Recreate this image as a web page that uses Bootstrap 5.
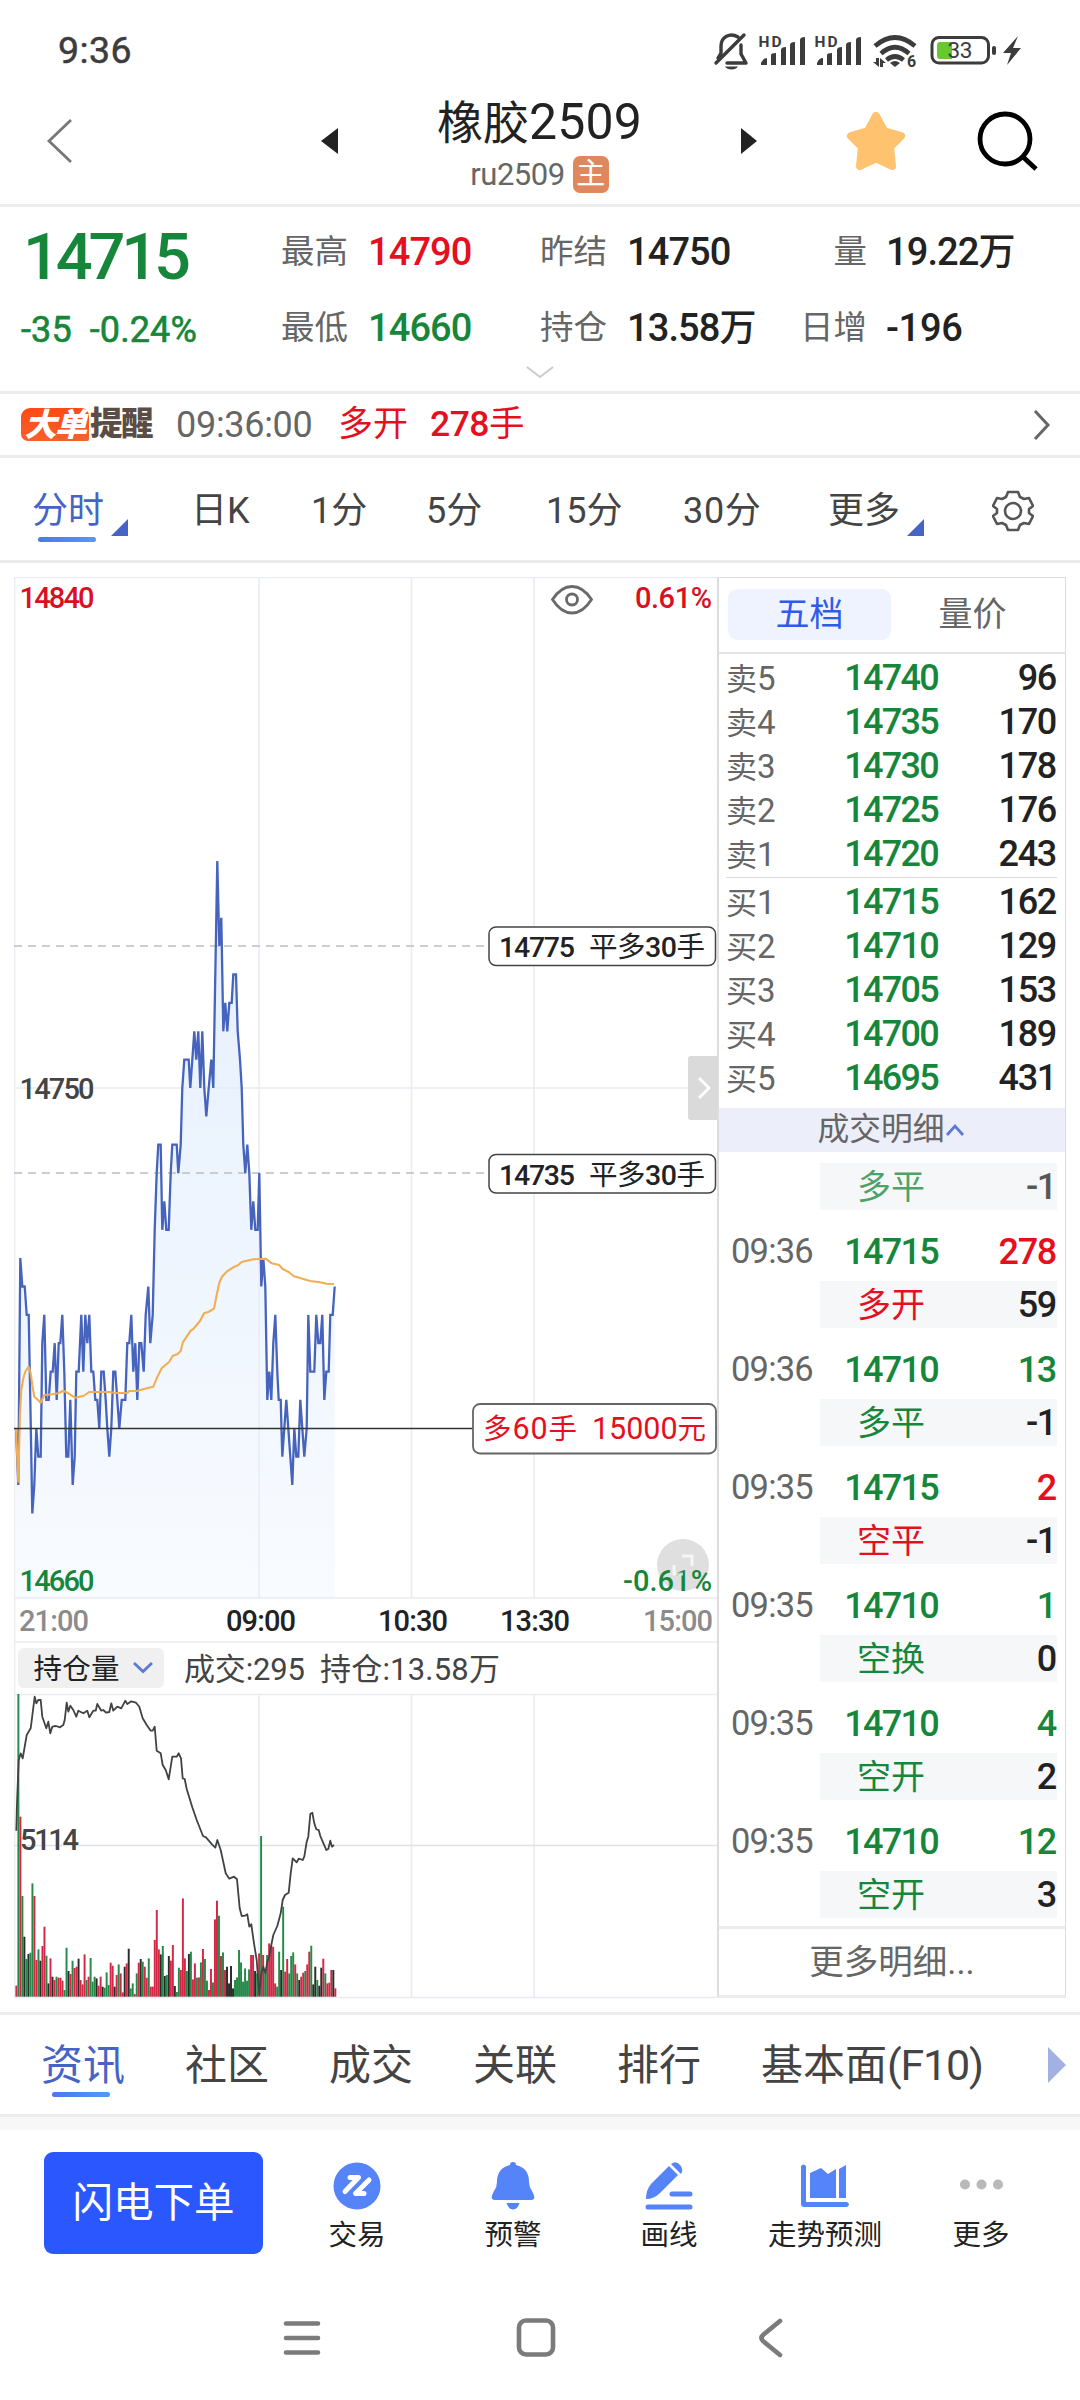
<!DOCTYPE html>
<html lang="zh-CN">
<head>
<meta charset="utf-8">
<meta name="viewport" content="width=device-width, initial-scale=1">
<title>橡胶2509</title>
<link href="https://cdn.jsdelivr.net/npm/bootstrap@5.3.0/dist/css/bootstrap.min.css" rel="stylesheet">
<style>
:root{--up:#e60f1e;--down:#16863a;--ink:#222;--dim:#666;--mid:#444;--brand:#4564c4;--rule:#ececec}
body{width:1080px;height:2400px;overflow:hidden;background:#fff;color:var(--ink);font-family:Roboto,"Noto Sans CJK SC",sans-serif;line-height:1}
svg{display:block;flex:none}
.up{color:var(--up)}.down{color:var(--down)}.dim{color:var(--dim)}
.num{font-weight:500;white-space:nowrap}
.rule-b{border-bottom:3px solid var(--rule)}
.status{height:97px;padding:4px 56px 0 58px;color:#3c3c3c}
.clock{font-size:37.5px;font-weight:400;letter-spacing:.4px;-webkit-text-stroke:.5px}
.topbar{height:110px}
.topbar .side-l{width:338px;padding-left:46px;padding-bottom:20px}
.topbar .side-r{width:339px;padding-bottom:20px}
.ttl{font-size:46px;padding-top:0;white-space:nowrap}
.ttl b{font-weight:400;font-size:50px;letter-spacing:.2px}
.sub{font-size:31px;margin-top:9px;letter-spacing:-.5px}
.chip-main{width:36px;height:37px;border-radius:7px;background:#e0885d;color:#fff;font-size:29px;letter-spacing:0}
.quote{display:grid;height:187px;grid-template-columns:281px 87px 172px 87px 173px 67px 1fr;grid-template-rows:90px 62px 28px;align-items:center;white-space:nowrap}
.quote .lb{font-size:33.5px;color:var(--dim)}
.quote .vl{font-size:38px;font-weight:500;letter-spacing:-.9px}
.quote .last{font-size:65px;font-weight:500;letter-spacing:-4.2px;padding:10px 0 0 23px}
.quote .chg{font-size:36px;letter-spacing:.1px;font-weight:400;padding:4px 0 0 21px;-webkit-text-stroke:.6px}
.vl i{font-style:normal;font-size:37px}
.alertbar{height:64px;padding:0 29px 0 21px;white-space:nowrap}
.logo{height:33px;font-weight:900;font-size:32px;letter-spacing:-1.5px}
.logo .lg1{background:linear-gradient(#ff4a14,#f8602c);color:#fff;font-style:italic;border-radius:9px 8px 2px 7px;width:68px;height:33px}
.logo .lg2{color:#5b4d45;font-size:32.5px;margin-left:1px}
.periods{display:grid;height:105px;grid-template-columns:159px 120px 115px 120px 137px 145px 164px 1fr;padding:3px 0 0 32px;align-items:center;font-size:36px;color:var(--mid)}
.periods .on,.foot-tabs .on{color:var(--brand)}
.on{position:relative}
.on::after{content:"";position:absolute;width:58px;height:5px;border-radius:3px;background:linear-gradient(90deg,#4c77ee,#4f9bf5)}
.periods .on::after{left:6px;top:51px}
.foot-tabs .on::after{left:11px;top:49px}
.tri{width:0;height:0;border-left:17px solid transparent;border-bottom:17px solid var(--brand);margin:33px 0 0 7px}
.main-area{height:1449px;padding:14px 14px 0 14px}
.side{width:349px;height:1421px;border:1px solid #ddd;border-left-width:2px;border-bottom:3px solid var(--rule)}
.side-tabs{height:76px;padding:11px 11px 11px 9px;border-bottom:2px solid #e4e4e4;font-size:34px}
.side-tabs .pill{width:163px;height:51px;border-radius:9px;padding-bottom:1px}
.side-tabs .pill.act{background:#eef3ff;color:#2f5be8}
.lv{height:44px;padding:0 9px 0 7px}
.lv .k{width:86px;font-size:31px;color:var(--dim);white-space:nowrap}
.lv .k b{font-weight:400;font-size:33px}
.p5{font-size:36px;font-weight:500;letter-spacing:-1.7px;width:126px;text-align:right;white-space:nowrap}
.q5{font-size:36px;font-weight:500;letter-spacing:-1.3px;text-align:right}
.lvset{padding-top:2px}
.lvset.sell{height:223px}
.lvset.buy{height:230px;margin:0}
.lvline{height:1px;margin:0 8px 0 7px;background:#dcdcdc}
.dhead{height:44px;background:#eceff9;color:var(--dim);font-size:31.8px;padding-right:2px}
.dcell{height:47px;margin:0 8px 0 101px;background:#f5f7f9;padding-right:1px}
.dcell .w{font-size:34px;width:105px;text-align:right}
.dprice{height:71px;padding:12px 9px 0 12px}
.dprice .t{width:81px;font-size:34.5px;color:var(--dim);letter-spacing:-.8px}
.morebtn{height:68px;border-top:3px solid var(--rule);font-size:34.5px;color:var(--dim);margin-top:8px;padding-top:2px}
.foot-tabs{display:grid;height:102px;padding-left:41px;grid-template-columns:144px 144px 144px 144px 144px 287px 1fr;align-items:center;font-size:42px;color:var(--mid);white-space:nowrap}
.foot-tabs b{font-weight:400;font-size:43px;letter-spacing:-1.2px}
.foot-tabs div{padding-top:2px}
.gapbar{height:13px;background:#f7f7f7}
.tools{height:146px;padding:22px 0 0 44px}
.order{width:219px;height:102px;border-radius:9px;background:#2b57ff;color:#fff;font-size:40.5px;border:0;padding:0}
.tool{width:156px;font-size:28.5px;color:var(--ink);padding-top:10px}
.tool span{margin-top:12px;white-space:nowrap}
.sysnav{height:124px}
.chart text{font-family:Roboto,"Noto Sans CJK SC",sans-serif}
</style>
<script src="https://cdn.jsdelivr.net/npm/bootstrap@5.3.0/dist/js/bootstrap.bundle.min.js"></script>
</head>
<body>
<header>
  <div class="status d-flex align-items-center justify-content-between">
    <div class="clock">9:36</div>
    <svg width="312" height="40" viewBox="712 30 312 40" fill="#3c3c3c">
      <g fill="none" stroke="#3c3c3c" stroke-width="3.4" stroke-linecap="round" stroke-linejoin="round"><path d="M716 62L744 34M738 36C730 31 721 36 721 45V52L718 57M741 44V53L746 62H727"/></g>
      <path d="M725 65.500h13c-2 4-11 4-13 0z"/>
      <g id="sig"><text x="758.500" y="46" font-size="15.500" font-weight="700" textLength="23">HD</text>
      <path d="M761 64v-2q2-5 6-5v7zM771 64v-10q0-2 5-2v12zM781 64V49q0-3 5-3v18zM790 64V44q0-3 5-3v23zM800 64V39q0-3 5-3v28z"/></g>
      <use href="#sig" x="56"/>
      <g fill="none" stroke="#3c3c3c" stroke-width="4.600"><path d="M875 45Q895 28 915 45M881 52.500Q895 40 909 52.500M886.500 59Q895 52 903.500 59"/></g>
      <path d="M890 62Q895 58 900 62L895 66zM873 61h3v-4h3v9zM880 66v-9l6 5h-3v4z"/>
      <text x="907" y="66" font-size="16" font-weight="700">6</text>
      <rect x="932" y="36.500" width="56.500" height="25.500" rx="7" fill="#fff" stroke="#3c3c3c" stroke-width="3"/>
      <path d="M940 41h12v17h-12q-3 0-3-3v-11q0-3 3-3z" fill="#67c92c"/><rect x="992" y="45" width="4" height="9" rx="2"/>
      <text x="947.500" y="57" font-size="22.500" textLength="25">33</text>
      <path d="M1018 35L1003 52h8l-4 12L1021 47h-8z"/>
    </svg>
  </div>
  <div class="topbar rule-b d-flex">
    <div class="side-l d-flex align-items-center justify-content-between">
      <svg width="28" height="48" fill="none" stroke="#777" stroke-width="2.800"><path d="M25 3L3 24 25 45"/></svg>
      <svg width="17" height="26" fill="#222"><path d="M0 13L17 0V26z"/></svg>
    </div>
    <div class="flex-fill d-flex flex-column align-items-center">
      <div class="ttl">橡胶<b>2509</b></div>
      <div class="sub dim d-flex align-items-center gap-2">ru2509<span class="chip-main d-flex align-items-center justify-content-center">主</span></div>
    </div>
    <div class="side-r d-flex align-items-center">
      <svg width="16" height="26" fill="#222"><path d="M16 13L0 0V26z"/></svg>
      <svg class="ms-auto" width="60" height="60" fill="#ffc36f" stroke="#ffc36f" stroke-width="8" stroke-linejoin="round"><path d="M30 5L38 20 55 25 44 36 46 55 30 47.500 14 55 16 36 5 25 22 20z"/></svg>
      <svg style="margin:0 42px 0 70px" width="62" height="62" fill="none" stroke="#000" stroke-width="4.800"><circle cx="29" cy="29" r="25"/><path d="M46 46L60 59"/></svg>
    </div>
  </div>
</header>

<section class="quote rule-b">
  <div class="last down">14715</div><div class="lb">最高</div><div class="vl up">14790</div><div class="lb">昨结</div><div class="vl">14750</div><div class="lb text-end">量</div><div class="vl" style="padding-left:19px">19.22<i>万</i></div>
  <div class="chg down">-35&nbsp; -0.24%</div><div class="lb">最低</div><div class="vl down">14660</div><div class="lb">持仓</div><div class="vl">13.58<i>万</i></div><div class="lb text-end">日增</div><div class="vl" style="padding-left:19px;letter-spacing:-.3px">-196</div>
  <svg style="grid-column:1/-1;justify-self:center" width="28" height="14" fill="none" stroke="#ccc" stroke-width="2"><path d="M1 1L14 11 27 1"/></svg>
</section>

<section class="alertbar rule-b d-flex align-items-center">
  <div class="logo d-flex align-items-center"><span class="lg1 d-flex align-items-center justify-content-center">大单</span><span class="lg2">提醒</span></div>
  <span class="dim num" style="font-size:36px;margin-left:24px;width:162px;letter-spacing:-.3px;font-weight:400">09:36:00</span>
  <span class="up" style="font-size:35px;width:92px">多开</span>
  <span class="up num" style="font-size:35.5px;letter-spacing:-.5px">278<span class="fw-normal">手</span></span>
  <svg class="ms-auto" width="18" height="32" fill="none" stroke="#666" stroke-width="3"><path d="M2 2L15 16 2 30"/></svg>
</section>

<nav class="periods rule-b">
  <div class="on d-flex align-items-center">分时<i class="tri"></i></div><div>日K</div><div>1分</div><div>5分</div><div>15分</div><div style="letter-spacing:.7px">30分</div>
  <div class="d-flex align-items-center">更多<i class="tri"></i></div>
  <svg width="42" height="42" viewBox="-21 -21 42 42" fill="none" stroke="#555" stroke-width="2.600" stroke-linejoin="round"><circle r="8"/><path d="M-5-19H5L7-14 11-12 16-13 20-5 16-2V2L20 5 16 13 11 12 7 14 5 19H-5L-7 14-11 12-16 13-20 5-16 2V-2L-20-5-16-13-11-12-7-14z"/></svg>
</nav>

<main class="main-area d-flex">
  <svg class="chart" width="703" height="1422" viewBox="14 577 703 1422">
    <defs><linearGradient id="fade" x1="0" y1="860" x2="0" y2="1598" gradientUnits="userSpaceOnUse"><stop offset="0" stop-color="#e4effd"/><stop offset="1" stop-color="#f8fbff"/></linearGradient></defs>
    <path id="area" fill="url(#fade)"/>
    <g fill="none" stroke="#e9ecf3" stroke-width="1.600">
      <path d="M14.500 1998V577.500H717M14 1088H717M14 1598H717M14 1642H717M14 1694.500H717M14 1997.500H717M411.500 578V1598M411.500 1695V1997M534 578V1598M534 1695V1997"/>
      <path d="M259 578V1598M259 1695V1997" stroke="#e8edf9"/><path d="M14 1845.500H717" stroke="#dde3ea"/>
    </g>
    <path d="M14 946H488M14 1173H488" stroke="#bdbdbd" stroke-width="1.600" stroke-dasharray="8 6" fill="none"/>
    <path id="price" fill="none" stroke="#4664bd" stroke-width="2.300"/>
    <path id="avg" fill="none" stroke="#f0ae55" stroke-width="2.100" stroke-linejoin="round"/>
    <path d="M14 1428.500H717" stroke="#333" stroke-width="1.300"/>
    <g font-size="29" font-weight="500">
      <text x="19.500" y="608" fill="#d9101f" textLength="75">14840</text>
      <text x="635" y="608" fill="#d9101f" textLength="77">0.61%</text>
      <text x="19.500" y="1099" fill="#444" textLength="75">14750</text>
      <text x="19.500" y="1591" fill="#16863a" textLength="75">14660</text>
      <text x="19" y="1631" fill="#8b8b8b" textLength="70">21:00</text>
      <text x="226" y="1631" fill="#222" textLength="70">09:00</text>
      <text x="378" y="1631" fill="#222" textLength="70">10:30</text>
      <text x="500" y="1631" fill="#222" textLength="70">13:30</text>
      <text x="643" y="1631" fill="#8b8b8b" textLength="70">15:00</text>
    </g>
    <g fill="none" stroke="#6a6a6a" stroke-width="2.800"><path d="M552.500 599.500Q561 586.500 572 586.500T591.500 599.500Q583 613 572 613T552.500 599.500z"/><circle cx="572" cy="599.500" r="5.500"/></g>
    <g fill="#fff" stroke="#444" stroke-width="1.500"><rect x="489" y="927" width="226.500" height="38.500" rx="7"/><rect x="489" y="1154.500" width="226.500" height="38.500" rx="7"/><rect x="473" y="1404" width="243" height="49.500" rx="7" stroke="#666" stroke-width="1.800"/></g>
    <g font-size="28.500" fill="#222" font-weight="500">
      <text x="499" y="957" textLength="76">14775</text><text x="589" y="957" textLength="116" font-weight="400">平多<tspan font-weight="500">30</tspan>手</text>
      <text x="499" y="1184.500" textLength="76">14735</text><text x="589" y="1184.500" textLength="116" font-weight="400">平多<tspan font-weight="500">30</tspan>手</text>
    </g>
    <g font-size="28.500" fill="#e60f1e"><text x="483" y="1439" textLength="94">多<tspan font-size="30.500">60</tspan>手</text><text x="592" y="1439" textLength="114"><tspan font-size="30.500">15000</tspan>元</text></g>
    <path d="M717 1056H691q-3 0-3 3v58q0 3 3 3h26z" fill="#dadada"/><path d="M699 1078L709 1088 699 1098" fill="none" stroke="#fff" stroke-width="2.800"/>
    <circle cx="683" cy="1565" r="26" fill="#dfdfdf"/>
    <text x="623" y="1591" fill="#16863a" textLength="89" font-size="29" font-weight="500">-0.61%</text>
    <path d="M682 1556h10v10M674 1565v9h9" fill="none" stroke="#fff" stroke-opacity=".7" stroke-width="3"/>
    <rect x="18" y="1648" width="146" height="40" rx="6" fill="#f0f0f0"/>
    <text x="33.500" y="1678.500" font-size="28.500" fill="#222" textLength="86">持仓量</text>
    <path d="M134 1663L143 1671.500 152 1663" fill="none" stroke="#5a7ad6" stroke-width="2.800"/>
    <g font-size="31" fill="#444"><text x="184" y="1680" textLength="121">成交:295</text><text x="320" y="1680" textLength="180">持仓:13.58万</text></g>
    <g id="vol"></g>
    <path id="oi" fill="none" stroke="#424242" stroke-width="1.800" stroke-linejoin="round"/>
    <text x="20" y="1850" font-size="29" font-weight="500" fill="#444" textLength="59">5114</text>
  </svg>

  <aside class="side">
    <div class="side-tabs d-flex"><div class="pill act d-flex align-items-center justify-content-center">五档</div><div class="pill dim d-flex align-items-center justify-content-center">量价</div></div>
    <div class="lvset sell" id="sell"></div>
    <div class="lvline"></div>
    <div class="lvset buy" id="buy"></div>
    <div class="dhead d-flex align-items-center justify-content-center">成交明细<svg width="20" height="14" fill="none" stroke="#5a7ad6" stroke-width="2.800"><path d="M2 12L10 3 18 12"/></svg></div>
    <div id="ticks" style="padding-top:11px"></div>
    <div class="morebtn d-flex align-items-center justify-content-center">更多明细...</div>
  </aside>
</main>

<nav class="foot-tabs rule-b" style="border-top:3px solid var(--rule);height:105px;">
  <div class="on">资讯</div><div>社区</div><div>成交</div><div>关联</div><div>排行</div><div>基本面<b>(F10)</b></div>
  <svg width="18" height="36" fill="#a3b1e2"><path d="M0 0L18 18 0 36z"/></svg>
</nav>
<div class="gapbar"></div>

<footer>
  <div class="tools d-flex">
    <button class="order">闪电下单</button>
    <div class="d-flex" style="margin-left:16px">
      <div class="tool d-flex flex-column align-items-center"><svg width="48" height="48" viewBox="0 0 48 48"><circle cx="24" cy="24" r="23.500" fill="#5583f8"/><path d="M17 15.500H25.500L12 29.500M36 18L22.500 31.500H31" fill="none" stroke="#fff" stroke-width="5" stroke-linecap="round" stroke-linejoin="round"/></svg><span>交易</span></div>
      <div class="tool d-flex flex-column align-items-center"><svg width="48" height="48" viewBox="0 0 48 48" fill="#5583f8"><path d="M21 3q0-3 3-3t3 3q13 3 13 17 0 5 3 9 5 9-1 9H6q-6 0-1-9 3-4 3-9Q8 6 21 3zM17.500 41h13q-2 6.500-6.500 6.500T17.500 41z"/></svg><span>预警</span></div>
      <div class="tool d-flex flex-column align-items-center"><svg width="48" height="48" viewBox="0 0 48 48" fill="#5583f8"><path d="M24 4L33 13 15 31Q9 37 1 37 1 28 6 22zM26 2Q31-2 35 3 39 7 36 12z"/><path d="M27 32H45M3 45H45" stroke="#5583f8" stroke-width="5" stroke-linecap="round"/></svg><span>画线</span></div>
      <div class="tool d-flex flex-column align-items-center"><svg width="48" height="48" viewBox="0 0 48 48" fill="#5583f8"><path d="M0 4q2.500-3 5 0V40H46q4 2.500 0 5H3q-3 0-3-3zM9 11L20 6 27 12 35 7V36H9zM38 7L45 3V36H38z"/></svg><span>走势预测</span></div>
      <div class="tool d-flex flex-column align-items-center"><svg width="48" height="48" viewBox="0 0 48 48" fill="#b9b9b9"><circle cx="8" cy="22.500" r="5"/><circle cx="24.500" cy="22.500" r="5"/><circle cx="41" cy="22.500" r="5"/></svg><span>更多</span></div>
    </div>
  </div>
  <div class="sysnav">
    <svg width="1080" height="124" viewBox="0 2276 1080 124" fill="none" stroke="#7b7b7b" stroke-width="4.600" stroke-linecap="round" stroke-linejoin="round"><path d="M286 2323.500H318M286 2338H318M286 2352.500H318"/><rect x="519" y="2320.500" width="34" height="34" rx="7"/><path d="M780 2321L763 2335q-3 3 0 6L780 2355"/></svg>
  </div>
</footer>

<script>
const $ = id => document.getElementById(id);
// price: x in thirds of a pixel, tick level counted from the position cost line
const price = "48:0 55:-2 61:6 67:5 74:5 80:4 86:4 91:1 97:-3 103:-2 109:0 115:-1 122:-1 127:3 133:4 139:1 146:1 152:2 158:2 164:3 170:1 176:3 181:3 187:4 193:2 199:-1 205:-1 211:1 218:-2 224:-1 229:2 236:2 244:4 250:2 256:4 262:3 268:4 274:2 280:2 286:1 292:1 298:0 304:2 311:2 317:1 322:0 328:-1 334:0 340:2 346:2 352:1 358:0 365:1 376:1 382:3 388:3 394:4 400:2 406:3 412:1 418:3 424:3 431:2 437:4 445:5 451:3 458:4 464:7 470:9 475:10 482:10 487:7 493:8 499:7 506:7 512:9 517:10 530:10 535:9 542:10 547:12 553:13 566:13 571:12 577:13 583:14 589:13 595:14 601:12 607:14 613:12 619:11 626:12 634:13 640:12 646:16 652:20 658:17 664:18 670:14 676:15 682:14 688:15 695:15 700:16 708:16 713:14 720:13 725:12 730:10 736:9 742:10 748:9 754:7 760:8 766:7 773:7 778:9 784:5 790:6 796:5 802:1 808:2 814:1 820:3 826:4 832:2 836:1 842:1 847:-1 853:0 859:1 865:0 871:-1 877:-2 883:0 889:-1 895:-1 901:1 907:0 913:-1 920:0 925:4 931:2 943:2 949:4 955:3 961:3 967:4 973:1 979:2 986:2 991:4 998:4 1004:5";
const line = "M" + price.split(" ").map(s => { const [x, n] = s.split(":"); return (x / 3).toFixed(1) + " " + (1428.3 - 28.36 * n).toFixed(1); }).join("L");
$("price").setAttribute("d", line);
$("area").setAttribute("d", line + "V1598H16Z");
const curve = (s, top) => "M" + s.split(" ").map(p => { const [x, y] = p.split(","); return (x / 3).toFixed(1) + " " + (top + y / 3).toFixed(1); }).join("L");
$("avg").setAttribute("d", curve("48,745 55,905 60,700 64,630 70,595 76,575 86,560 92,580 97,615 103,650 112,658 122,668 133,645 155,643 175,640 190,632 205,640 225,653 250,648 268,636 330,636 345,639 382,639 388,633 410,633 440,625 460,620 470,595 485,565 508,545 518,527 532,523 542,513 548,488 572,452 580,447 600,423 612,400 625,396 642,386 650,345 658,308 666,290 680,275 700,262 714,256 725,246 760,238 797,236 815,250 838,255 848,267 866,276 882,289 900,294 930,303 955,306 980,311 1002,312", 1180));
$("oi").setAttribute("d", curve("49,722 51,640 56,510 62,490 68,505 80,435 92,415 104,320 109,340 115,330 122,330 127,380 139,415 145,395 151,430 157,410 168,408 180,412 190,405 194,390 200,338 205,365 211,347 220,360 229,380 235,362 250,370 262,362 268,382 280,362 287,362 292,342 304,362 310,360 318,368 328,366 334,340 340,362 352,350 364,355 376,332 382,342 394,334 408,338 418,350 428,385 440,405 452,422 458,422 464,410 470,482 482,490 488,525 497,540 506,568 517,500 530,500 536,490 543,505 548,565 554,567 560,597 577,652 590,690 609,738 618,742 636,763 646,773 652,750 662,780 677,850 688,866 702,860 711,868 719,955 725,978 735,977 742,973 748,1010 754,1003 762,1060 770,1110 778,1215 784,1150 790,1130 796,1150 802,1115 808,1100 814,1065 820,1035 832,1008 842,970 848,930 855,915 866,908 872,850 878,805 890,817 896,806 908,810 913,800 920,755 925,740 931,672 937,668 943,700 949,718 956,720 961,738 968,755 979,780 985,777 991,752 996,770 1002,765", 1590));
const vol = "1187r 312g 680r 918g 1040k 1107g 1092k 1088g 880g 918r 1110r 1078g 1112k 1068r 1010r 1097g 1180k 1105r 1160k 1170r 1160g 1163r 1163r 1172r 1200g 1073g 1143k 1152r 1112g 1134r 1130r 1106k 1170r 1183r 1093r 1170g 1160r 1104g 1175g 1160g 1165k 1187r 1160r 1190k 1193g 1147g 1185g 1118r 1127r 1190k 1155r 1123g 1150r 1207r 1130k 1120r 1076k 1195g 1180g 1212r 1150g 1118r 1107k 1115g 1130r 1163r 1105g 1190r 1190r 1050r 960r 1078r 1093k 1068g 1158k 1155g 1098k 1112r 1065r 1188k 1206g 1133g 1140r 925r 1105r 1143g 1092k 1085g 1168r 1120r 1163g 1162r 1117g 1077r 1107g 1172g 1200r 1137r 1177g 988r 932r 977g 1098r 1087g 1140r 1130k 1180k 1128k 1195k 1170g 1162g 1080g 1117g 1175g 1135g 1172g 1138g 1095r 1095r 1143k 1150g 1090r 738g 1095r 1150g 1095g 1060r 1065r 1070r 1180r 1190g 1085g 1140k 950g 1145r 1107r 1150g 1098g 1087g 1123r 1150g 1170k 1160r 1148r 1143g 1123r 1085r 1067g 1183k 1130k 1170g 1187k 1133k 1106r 1150g 1180r 1178r 1140r 1140k 1195r".split(" ");
const tone = {r: "#d42645", g: "#258a47", k: "#2b2b2b"};
$("vol").innerHTML = vol.map((v, i) => { const h = (1220 - parseInt(v)) / 3; return `<rect x="${(15.4 + i * 2.006).toFixed(2)}" y="${(1996.7 - h).toFixed(1)}" width="1.95" height="${h.toFixed(1)}" fill="${tone[v.slice(-1)]}"/>`; }).join("");
const level = ([k, n, p, q]) => `<div class="lv d-flex align-items-center"><span class="k">${k}<b>${n}</b></span><span class="p5 down">${p}</span><span class="q5 flex-fill">${q}</span></div>`;
$("sell").innerHTML = [["卖",5,14740,96],["卖",4,14735,170],["卖",3,14730,178],["卖",2,14725,176],["卖",1,14720,243]].map(level).join("");
$("buy").innerHTML = [["买",1,14715,162],["买",2,14710,129],["买",3,14705,153],["买",4,14700,189],["买",5,14695,431]].map(level).join("");
const cell = (w, c, n, o) => `<div class="dcell d-flex align-items-center"><span class="w ${c}${o}">${w}</span><span class="q5 flex-fill${o}">${n}</span></div>`;
$("ticks").innerHTML = cell("多平", "down", "-1", " opacity-75") + [["09:36",14715,278,"up","多开",59],["09:36",14710,13,"down","多平",-1],["09:35",14715,2,"up","空平",-1],["09:35",14710,1,"down","空换",0],["09:35",14710,4,"down","空开",2],["09:35",14710,12,"down","空开",3]].map(([t,p,q,c,w,n]) => `<div class="dprice d-flex align-items-center"><span class="t">${t}</span><span class="p5 down">${p}</span><span class="q5 flex-fill ${c}">${q}</span></div>` + cell(w, c, n, "")).join("");
</script>
</body>
</html>
